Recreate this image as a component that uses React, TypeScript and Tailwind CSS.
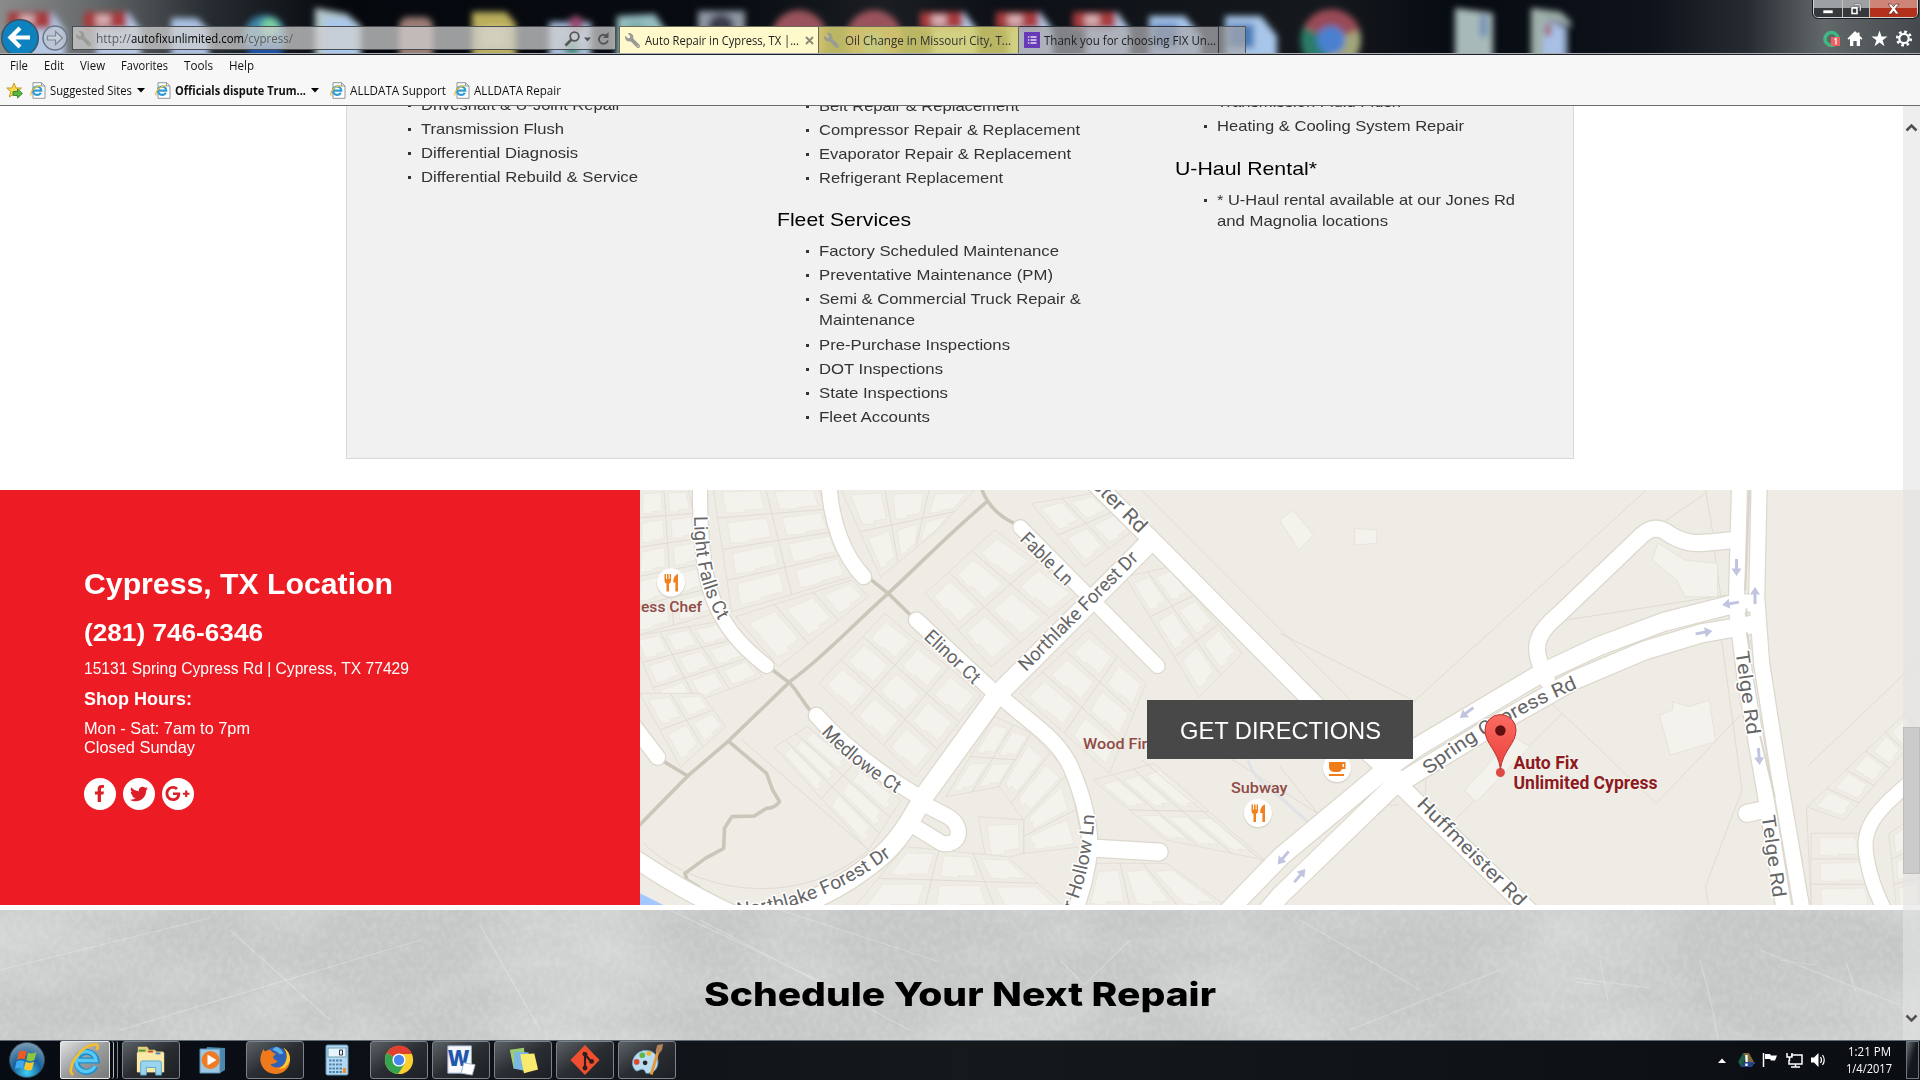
import React, { useLayoutEffect, useRef, useState } from "react";
import { FaFacebookF, FaTwitter, FaGooglePlusG, FaWrench } from "react-icons/fa";

/* Text stretched to a fixed measure, whatever the natural width of the face. */
function Fit({ w, children, className = "" }: { w: number; children: string; className?: string }) {
  const ref = useRef<HTMLSpanElement>(null);
  const [k, setK] = useState(1);
  useLayoutEffect(() => {
    if (ref.current && ref.current.offsetWidth) setK(w / ref.current.getBoundingClientRect().width);
  }, [w, children]);
  return (
    <span className={"block shrink-0 whitespace-pre " + className} style={{ width: w }}>
      <span ref={ref} className="inline-block origin-left" style={{ transform: k === 1 ? undefined : `scaleX(${k})` }}>
        {children}
      </span>
    </span>
  );
}

/* ---------- window frame ---------- */

function Pdf({ x }: { x: number }) {
  return (
    <g>
      <path d={`M${x + 12} 12h32l13 18v40h-45z`} fill="#b4c8e6" />
      <rect x={x} y="12" width="43" height="17" fill="#a83a3c" />
      <rect x={x + 12} y="15" width="14" height="10" fill="#d8b0b4" />
    </g>
  );
}

function GlassBackdrop() {
  return (
    <svg className="absolute inset-0" width="1920" height="54" viewBox="0 0 1920 54">
      <defs>
        <linearGradient id="glass" x1="0" x2="1">
          <stop offset="0" stopColor="#8a8c8c" />
          <stop offset="0.05" stopColor="#65686a" />
          <stop offset="0.11" stopColor="#252b30" />
          <stop offset="0.18" stopColor="#05080d" />
          <stop offset="0.38" stopColor="#080c12" />
          <stop offset="0.46" stopColor="#1a1e22" />
          <stop offset="0.52" stopColor="#0d1117" />
          <stop offset="0.69" stopColor="#15191d" />
          <stop offset="0.76" stopColor="#070b12" />
          <stop offset="0.86" stopColor="#0e131b" />
          <stop offset="0.91" stopColor="#262b31" />
          <stop offset="0.95" stopColor="#62686a" />
          <stop offset="1" stopColor="#43494c" />
        </linearGradient>
        <filter id="soft" x="-5%" y="-50%" width="110%" height="200%">
          <feGaussianBlur stdDeviation="3" />
        </filter>
      </defs>
      <rect width="1920" height="54" fill="url(#glass)" />
      <g filter="url(#soft)">
        <Pdf x={8} />
        <Pdf x={84} />
        <path d="M171 18h26l12 12v30h-38z" fill="#a9c0e2" />
        <circle cx="265" cy="36" r="21" fill="#3d83a8" />
        <circle cx="270" cy="27" r="9" fill="#78d2a0" />
        <path d="M248 44h34v20h-34z" fill="#1f4fa8" />
        <path d="M315 8l32 6 14 12v40h-46z" fill="#b4c6c8" />
        <path d="M324 18h24l10 10v40h-34z" fill="#a9c8ec" />
        <rect x="399" y="17" width="34" height="50" rx="9" fill="#9b7d74" />
        <path d="M472 12h34l10 12v40h-44z" fill="#b9ad5c" />
        <rect x="482" y="27" width="24" height="20" fill="#d8cd88" />
        <path d="M549 22h42v40h-42z" fill="#a6bede" />
        <circle cx="576" cy="24" r="8" fill="#9a4872" />
        <circle cx="572" cy="48" r="8" fill="#3d8a74" />
        <path d="M617 16l38 -2 13 20v30h-52z" fill="#94bcc0" />
        <circle cx="636" cy="32" r="10" fill="#76aa9c" />
        <rect x="698" y="11" width="47" height="50" fill="#8f98a3" />
        <circle cx="721" cy="27" r="13" fill="#3a3e50" />
        <circle cx="799" cy="38" r="28" fill="#9a525c" />
        <circle cx="799" cy="44" r="11" fill="#62a0c8" />
        <circle cx="874" cy="38" r="28" fill="#9a525c" />
        <circle cx="874" cy="44" r="11" fill="#62a0c8" />
        <Pdf x={920} />
        <Pdf x={996} />
        <Pdf x={1073} />
        <path d="M1149 16h36l16 20v30h-52z" fill="#a8c6ea" />
        <rect x="1152" y="24" width="26" height="24" fill="#467ab8" />
        <path d="M1225 16h36l16 20v30h-52z" fill="#a8c6ea" />
        <rect x="1228" y="24" width="26" height="24" fill="#467ab8" />
        <circle cx="1331" cy="40" r="30" fill="#a2a67a" />
        <path d="M1331 40L1304 27A30 30 0 0 1 1360 30z" fill="#984c56" />
        <path d="M1331 40L1304 27A30 30 0 0 0 1326 70z" fill="#2c7c68" />
        <circle cx="1331" cy="40" r="14" fill="#4a80d0" />
        <path d="M1455 8l38 5v50h-38z" fill="#a8bab8" />
        <rect x="1480" y="15" width="7" height="22" fill="#6d8db8" />
        <path d="M1531 8l30 4 10 10v40h-40z" fill="#9fb0aa" />
        <path d="M1543 22h22v40h-22z" fill="#a8c0e6" />
        <rect x="1545" y="24" width="6" height="12" fill="#a05048" />
        <path d="M1545 18l26 8v40h-6V28z" fill="#141a20" />
      </g>
    </svg>
  );
}

function Wrench() {
  return <FaWrench className="size-[15px] shrink-0 -scale-x-100 text-[#9a9a96]" />;
}

function TitleBar() {
  return (
    <header className="relative h-[54px] overflow-hidden bg-[#0a0e14]">
      <GlassBackdrop />
      <div className="relative flex h-[54px] items-start">
        <div className="flex h-[54px] w-[72px] shrink-0 items-start overflow-hidden pt-[19px]">
          <svg width="72" height="38" viewBox="0 0 72 38">
            <circle cx="20" cy="19" r="18.3" fill="#0d82be" stroke="#3f5360" strokeWidth="1.5" />
            <path d="M20 9l-9.5 9.5 9.5 9.5M11 18.5h19" fill="none" stroke="#fff" strokeWidth="4.2" />
            <circle cx="55" cy="19" r="12" fill="#bcc6d2" fillOpacity=".75" stroke="#6a7684" strokeWidth="1.5" />
            <path d="M47.5 17h8v-4.5l7 6.5-7 6.5V21h-8z" fill="#c8d0da" stroke="#7b8694" strokeWidth="1.2" />
          </svg>
        </div>
        <div className="mt-[26px] flex h-[24px] w-[544px] shrink-0 items-center border border-[#4a4e52] bg-[#cfcfcf]/75 pl-[3px] text-[12px] leading-[22px]">
          <Wrench />
          <Fit w={35} className="ml-[5px] mt-[2px] text-[#5c5c5c]">http://</Fit>
          <Fit w={113} className="mt-[2px] text-black">autofixunlimited.com</Fit>
          <Fit w={49} className="mt-[2px] text-[#5c5c5c]">/cypress/</Fit>
          <svg className="ml-auto mt-[2px]" width="52" height="20" viewBox="0 0 52 20">
            <circle cx="11.500" cy="7.500" r="4.300" fill="none" stroke="#555" strokeWidth="1.800" />
            <path d="M8.500 10.500l-6 6" stroke="#555" strokeWidth="2.600" />
            <path d="M21 8.500h7l-3.500 4z" fill="#555" />
            <path d="M44 7.500a4.500 4.500 0 1 0 .8 4" fill="none" stroke="#555" strokeWidth="1.900" />
            <path d="M45.500 3v6h-5.500z" fill="#555" />
          </svg>
        </div>
        <div className="ml-[3px] mt-[26px] flex h-[27px] text-[12px] leading-[26px]">
          <div className="flex w-[200px] items-center border border-b-0 border-[#6a6a58] bg-[#fff9cb] pl-[5px]">
            <Wrench />
            <Fit w={154} className="ml-[5px] mt-px text-[#222]">Auto Repair in Cypress, TX |...</Fit>
            <svg className="ml-[6px]" width="9" height="9" viewBox="0 0 9 9">
              <path d="M1 1l7 7M8 1l-7 7" stroke="#8e8c78" strokeWidth="2" />
            </svg>
          </div>
          <div className="flex w-[200px] items-center border-r border-t border-[#6a6a58] bg-[#d7d271]/85 pl-[5px]">
            <Wrench />
            <Fit w={166} className="ml-[6px] mt-px text-[#333]">Oil Change in Missouri City, T...</Fit>
          </div>
          <div className="flex w-[200px] items-center border-r border-t border-[#30343c] bg-[#a9a9ad]/75 pl-[5px]">
            <svg className="shrink-0" width="16" height="16" viewBox="0 0 16 16">
              <rect width="16" height="16" fill="#673ab7" />
              <path d="M6.500 5h6M6.500 8h6M6.500 11h6M4 5h1.300M4 8h1.300M4 11h1.300" stroke="#e6dcf5" strokeWidth="1.300" />
            </svg>
            <Fit w={172} className="ml-[4px] mt-px text-[#222]">Thank you for choosing FIX Un...</Fit>
          </div>
          <div className="w-[27px] border-r border-t border-[#50555e] bg-[#a9a9ad]/70" />
        </div>
        <div className="ml-auto flex w-[110px] shrink-0 flex-col">
          <div className="ml-[3px] flex h-[18px] w-[105px] overflow-hidden rounded-b-[5px] border border-t-0 border-[#d0d4d6] outline outline-[#15191d]">
            <div className="flex w-[29px] items-center justify-center border-r border-[#c0c4c6] bg-linear-to-b from-[#9da1a3] from-45% to-[#35393c] to-50%">
              <svg width="12" height="12"><rect x="1" y="7" width="10" height="3.500" fill="#fff" stroke="#444" strokeWidth=".7" /></svg>
            </div>
            <div className="flex w-[27px] items-center justify-center border-r border-[#c0c4c6] bg-linear-to-b from-[#9da1a3] from-45% to-[#35393c] to-50%">
              <svg width="12" height="12" viewBox="0 0 12 12">
                <path d="M4 1h7v7H9.500V2.500H4zM1 3.500h7v8H1zM3 6v3.500h3V6z" fill="#fff" fillRule="evenodd" stroke="#444" strokeWidth=".5" />
              </svg>
            </div>
            <div className="flex flex-1 items-center justify-center bg-linear-to-b from-[#cf8478] from-45% to-[#b5301a] to-50%">
              <svg width="13" height="12" viewBox="0 0 13 12">
                <path d="M1 1h3.300l2.200 2.800L8.700 1H12L8.300 5.800 12 11H8.700L6.500 8 4.300 11H1l3.700-5.200z" fill="#fff" stroke="#5a2a24" strokeWidth=".7" />
              </svg>
            </div>
          </div>
          <svg className="mt-[10px]" width="110" height="22" viewBox="0 0 110 22">
            <circle cx="21.500" cy="11" r="6.500" fill="none" stroke="#3fb984" strokeWidth="3.500" />
            <rect x="21" y="9" width="9" height="9" fill="#ee6163" />
            <path d="M24.500 11.500l1.500-1v6" fill="none" stroke="#fff" strokeWidth="1.200" />
            <path d="M45 3l-7.500 7.500 1.200 1.200 1.300-1.200V18h3.300v-5h3.400v5H50v-7.500l1.300 1.200 1.200-1.200-3-3V4.500h-2v1z" fill="#fff" />
            <path d="M69.500 2.500l2 6h6l-4.900 3.700 1.900 6.100-5-3.700-5 3.700 1.900-6.100-4.900-3.700h6z" fill="#fff" />
            <circle cx="94" cy="10.500" r="6.800" fill="none" stroke="#fff" strokeWidth="2.600" strokeDasharray="2.670 2.670" />
            <circle cx="94" cy="10.500" r="4.700" fill="none" stroke="#fff" strokeWidth="2.200" />
          </svg>
        </div>
      </div>
      <div className="absolute inset-x-0 bottom-0 h-px bg-[#a9adb3]" />
    </header>
  );
}

function IePage() {
  return (
    <svg className="shrink-0" width="16" height="17" viewBox="0 0 16 17">
      <path d="M3 .7h8.500L15 4v12.300H3z" fill="#fff" stroke="#8e959c" />
      <path d="M11.500 .7V4H15" fill="none" stroke="#8e959c" />
      <path d="M10.800 10.700A4.200 4.200 0 1 1 11.300 8.600H3.500" fill="none" stroke="#2f9ad8" strokeWidth="2.100" />
      <path d="M1.200 13.500C-.5 10 5 3.500 11 4" fill="none" stroke="#e8b838" strokeWidth="1.200" />
    </svg>
  );
}

function Caret() {
  return <svg className="shrink-0" width="8" height="5"><path d="M0 0h8L4 4.500z" fill="#000" /></svg>;
}

function Toolbars() {
  return (
    <div className="h-[52px] border-b border-t border-b-[#6b6b70] border-t-[#1c2228] bg-[#f7f7f7] text-[12px] text-[#111]">
      <nav className="flex h-[22px] items-center pl-[10px] leading-[22px]">
        <Fit w={18} className="mr-[16px]">File</Fit>
        <Fit w={20} className="mr-[16px]">Edit</Fit>
        <Fit w={25} className="mr-[16px]">View</Fit>
        <Fit w={47} className="mr-[16px]">Favorites</Fit>
        <Fit w={29} className="mr-[16px]">Tools</Fit>
        <Fit w={25}>Help</Fit>
      </nav>
      <nav className="flex h-[27px] items-center pl-[6px] leading-[27px]">
        <svg className="mr-[7px] shrink-0" width="17" height="17" viewBox="0 0 17 17">
          <path d="M8 1l2 5h5.500l-4.300 3.600 1.500 5.400L8 12l-4.700 3 1.500-5.400L.7 6H6z" fill="#f9da52" stroke="#c99a24" />
          <path d="M7 9.500h4.500V7l5 4.500-5 4.500v-2.500H7z" fill="#55b840" stroke="#2c7a22" strokeWidth=".8" />
        </svg>
        <IePage />
        <Fit w={82} className="ml-[4px] mr-[5px]">Suggested Sites</Fit>
        <Caret />
        <span className="w-[10px] shrink-0" />
        <IePage />
        <Fit w={131} className="ml-[4px] mr-[5px] font-bold">Officials dispute Trum...</Fit>
        <Caret />
        <span className="w-[11px] shrink-0" />
        <IePage />
        <Fit w={96} className="ml-[4px] mr-[8px]">ALLDATA Support</Fit>
        <IePage />
        <Fit w={87} className="ml-[4px]">ALLDATA Repair</Fit>
      </nav>
    </div>
  );
}

/* ---------- services panel ---------- */

type Item = [string, number][];

function Services({ items }: { items: Item[] }) {
  return (
    <ul className="text-[15px] leading-[21px] text-[#333]">
      {items.map((lines) => (
        <li key={lines[0][0]} className="mb-[3.1px] flex">
          <span className="mt-[10px] mr-[10px] size-[3px] shrink-0 bg-[#333]" />
          <span>
            {lines.map(([t, w]) => (
              <Fit key={t} w={w}>{t}</Fit>
            ))}
          </span>
        </li>
      ))}
    </ul>
  );
}

function ServicesPanel() {
  return (
    <section className="flex h-[384px] shrink-0 justify-center">
      <div className="mr-[1px] flex h-[353px] w-[1228px] overflow-hidden border border-t-0 border-[#d8d8d8] bg-[#f1f1f1] font-['Liberation_Sans',sans-serif]">
        <div className="-mt-[12px] ml-[61px] w-[369px] shrink-0">
          <Services items={[[["Driveshaft & U-Joint Repair", 200]], [["Transmission Flush", 143]], [["Differential Diagnosis", 157]], [["Differential Rebuild & Service", 217]]]} />
        </div>
        <div className="-mt-[11.5px] w-[398px] shrink-0">
          <div className="ml-[29px]">
            <Services items={[[["Belt Repair & Replacement", 200]], [["Compressor Repair & Replacement", 261]], [["Evaporator Repair & Replacement", 252]], [["Refrigerant Replacement", 184]]]} />
          </div>
          <h3 className="mt-[19.500px] mb-[7px] text-[19px] leading-[26px] text-black"><Fit w={134}>Fleet Services</Fit></h3>
          <div className="ml-[29px]">
            <Services
              items={[
                [["Factory Scheduled Maintenance", 240]],
                [["Preventative Maintenance (PM)", 234]],
                [["Semi & Commercial Truck Repair &", 262], ["Maintenance", 96]],
                [["Pre-Purchase Inspections", 191]],
                [["DOT Inspections", 124]],
                [["State Inspections", 129]],
                [["Fleet Accounts", 111]],
              ]}
            />
          </div>
        </div>
        <div className="-mt-[15px] shrink-0">
          <div className="ml-[29px]">
            <Services items={[[["Transmission Fluid Flush", 184]], [["Heating & Cooling System Repair", 247]]]} />
          </div>
          <h3 className="mt-[20px] mb-[7px] text-[19px] leading-[26px] text-black"><Fit w={142}>U-Haul Rental*</Fit></h3>
          <div className="ml-[29px]">
            <Services items={[[["* U-Haul rental available at our Jones Rd", 298], ["and Magnolia locations", 171]]]} />
          </div>
        </div>
      </div>
    </section>
  );
}

/* ---------- map ---------- */

type P = [number, number];
type Block = { q: [P, P, P, P]; rows: number; cols: number };

/* City blocks as quads (top-left, top-right, bottom-right, bottom-left), cut into parcels. */
const blocks: Block[] = [
  { q: [[0, 25], [118, 25], [185, 400], [-20, 470]], rows: 5, cols: 2 },
  { q: [[-20, 470], [190, 425], [300, 590], [60, 700]], rows: 3, cols: 3 },
  { q: [[0, 640], [150, 640], [210, 740], [100, 860]], rows: 2, cols: 2 },
  { q: [[180, 20], [435, 20], [520, 290], [225, 395]], rows: 4, cols: 2 },
  { q: [[235, 410], [520, 300], [560, 350], [340, 560]], rows: 1, cols: 3 },
  { q: [[490, 20], [820, 30], [720, 160], [590, 290]], rows: 2, cols: 3 },
  { q: [[600, 400], [835, 645], [675, 890], [440, 610]], rows: 3, cols: 3 },
  { q: [[870, 150], [1075, 340], [860, 560], [700, 340]], rows: 3, cols: 2 },
  { q: [[960, 70], [1110, 40], [1210, 150], [1090, 260]], rows: 2, cols: 2 },
  { q: [[1100, 450], [1240, 610], [1150, 880], [930, 640]], rows: 3, cols: 2 },
  { q: [[1190, 290], [1300, 260], [1475, 520], [1370, 650]], rows: 3, cols: 2 },
  { q: [[330, 800], [410, 740], [640, 960], [560, 1110]], rows: 2, cols: 3 },
  { q: [[870, 710], [960, 760], [880, 920], [750, 950]], rows: 2, cols: 2 },
  { q: [[960, 760], [1050, 880], [940, 1020], [880, 920]], rows: 1, cols: 2 },
  { q: [[1050, 880], [1085, 1100], [940, 1120], [940, 1020]], rows: 1, cols: 2 },
  { q: [[830, 1010], [940, 1020], [940, 1120], [850, 1150]], rows: 1, cols: 1 },
  { q: [[650, 1100], [900, 1130], [1050, 1290], [520, 1290]], rows: 2, cols: 3 },
  { q: [[1110, 900], [1260, 850], [1530, 1140], [1290, 1080]], rows: 2, cols: 3 },
  { q: [[1120, 1150], [1290, 1150], [1450, 1290], [1080, 1290]], rows: 1, cols: 3 },
  { q: [[2860, 980], [3100, 700], [3136, 760], [2950, 1020]], rows: 1, cols: 5 },
  { q: [[2870, 1060], [2990, 1060], [3030, 1290], [2870, 1290]], rows: 3, cols: 1 },
  { q: [[3060, 1060], [3136, 1000], [3136, 1290], [3080, 1290]], rows: 3, cols: 1 },
];

function lerp(q: Block["q"], u: number, v: number): P {
  const f = (i: 0 | 1) =>
    (1 - v) * ((1 - u) * q[0][i] + u * q[1][i]) + v * ((1 - u) * q[3][i] + u * q[2][i]);
  return [Math.round(f(0)), Math.round(f(1))];
}

function Parcels({ q, rows, cols }: Block) {
  const cells: React.ReactNode[] = [];
  for (let r = 0; r < rows; r++)
    for (let c = 0; c < cols; c++) {
      const at = (du: number, dv: number) => lerp(q, (c + du) / cols, (r + dv) / rows).join(",");
      cells.push(
        <g key={`${r}-${c}`}>
          <polygon points={[at(0, 0), at(1, 0), at(1, 1), at(0, 1)].join(" ")} fill="#efece5" stroke="#dfdbd2" strokeWidth="2" />
          <polygon
            points={[at(0.16, 0.18), at(0.88, 0.14), at(0.88, 0.82), at(0.5, 0.82), at(0.5, 0.9), at(0.16, 0.86)].join(" ")}
            fill="#f4f2ec"
            stroke="#e8e5dd"
            strokeWidth="2"
          />
        </g>
      );
    }
  return <g>{cells}</g>;
}

const roads: [string, number][] = [
  ["M147 10V60C150 250 165 350 210 430C230 470 270 520 310 558", 14],
  ["M463 10C468 130 500 230 548 290", 15],
  ["M677 420L875 645", 15],
  ["M875 640C960 735 1020 770 1055 860C1090 960 1104 1050 1102 1110C1095 1190 1080 1240 1065 1300", 15],
  ["M932 142L1268 558", 14],
  ["M1250 185L875 645L695 950C660 1030 630 1090 580 1140C500 1220 400 1285 280 1310", 19],
  ["M-20 1130C60 1195 120 1240 240 1310", 17],
  ["M432 706C500 800 600 890 690 955", 15],
  ["M700 975L755 1010C795 1040 785 1100 740 1090L660 1030", 15],
  ["M1090 -20L1250 175L1660 680L1850 890", 17],
  ["M1840 890L2195 1310", 16],
  ["M1115 1105L1272 1116", 17],
  ["M-20 730L43 832", 15],
  ["M1420 1320L1570 1130L1820 875L1905 800L2210 578L2350 498L2510 425L2670 375L2710 370", 18],
  ["M1510 1330L1570 1245L1840 925L1910 872L2080 745L2290 600L2460 512L2600 460L2720 435", 18],
  ["M2222 600L2205 550C2190 500 2195 460 2250 405L2455 165C2478 140 2500 140 2525 165C2575 200 2600 190 2680 180", 16],
  ["M2694 10L2686 380L2708 600L2758 950L2806 1310", 15],
  ["M2742 10L2736 350L2748 550L2790 880L2850 1310", 15],
  ["M2750 990L2712 1000", 17],
  ["M3160 860C3010 1000 2990 1050 3008 1150C3020 1230 3040 1260 3055 1310", 14],
];

const footpaths = [
  "M835 20C850 75 880 110 920 132",
  "M850 65C740 180 680 260 608 340C500 460 450 530 370 602L215 785L115 890L-5 1040",
  "M565 298L608 340L665 408",
  "M325 570L368 610C390 640 400 670 422 698",
  "M55 842L117 888",
  "M218 785L310 880L325 930L342 965Q330 985 310 985L280 1008L225 1010L207 1045L205 1105L160 1135L110 1180L115 1200L145 1222",
];

const boundaries =
  "M2470 25L1900 660M2610 25L2628 155M2610 40L2480 150M1225 25L1870 820M2630 190L2648 350M2270 420L2660 345M2225 660L2490 970L2700 700M2260 700L2000 1015M1925 900V950M2650 480L2700 930L2610 1220L2620 1290M3150 520L2860 860M1900 665L1568 460M1440 830L1660 1000M1230 840L1560 1180M250 780L560 1110M10 1090C120 1230 380 1300 560 1110M1870 940L2160 1290M1860 975H1830L1568 1275M2720 480L2850 1150M1568 860L1660 1000M2858 985L2870 1290";

const arrows: [number, number, number][] = [
  [1096.500, 77, 180], [1115, 106, 0], [1091, 113.500, -100], [1063.500, 142.500, 80],
  [827, 222.500, -128], [1119, 266, 176], [643.500, 367.500, -140], [659.500, 386, 40],
];

function Label({ x, y, r = 0, len, size = 19, children }: { x: number; y: number; r?: number; len: number; size?: number; children: string }) {
  return (
    <text transform={`translate(${x} ${y}) rotate(${r})`} fontSize={size} textLength={len} lengthAdjust="spacingAndGlyphs">
      {children}
    </text>
  );
}

function PathLabel({ id, len, children }: { id: string; len: number; children: string }) {
  return (
    <text fontSize="19" textLength={len} lengthAdjust="spacingAndGlyphs">
      <textPath href={"#" + id} textLength={len} lengthAdjust="spacingAndGlyphs">{children}</textPath>
    </text>
  );
}

function Dining({ x, y }: { x: number; y: number }) {
  return (
    <g transform={`translate(${x} ${y})`}>
      <circle r="14.500" cy="1" fill="#d9d5cc" />
      <circle r="14" fill="#fff" />
      <path d="M-6.500 -8.500v6.500q0 2.500 2 3v8h2.500V1q2-.5 2-3v-6.500h-1.400v5h-1v-5h-1.600v5h-1v-5zM7 -8.500q-4.800 1-4.800 8.500h2.200v9h2.600z" fill="#f0811c" />
    </g>
  );
}

function StreetMap() {
  return (
    <svg width="1280" height="415" viewBox="0 0 1280 415" className="block bg-[#efece5] font-['Roboto',sans-serif]">
      <defs>
        <path id="lightFalls" d="M54 26C55 75 62 103 82 136" />
        <path id="northlake" d="M97 426C150 422 205 402 259 360" />
        <path id="hollow" d="M434 420C445 393 453 362 455 318" />
        <path id="spring" d="M789 285Q850 235 945 195" />
        <path id="medlowe" d="M181 243Q211 277 270 312" />
        <linearGradient id="pin" x1="0" y1="0" x2="0" y2="1">
          <stop offset="0" stopColor="#fb6b62" />
          <stop offset="1" stopColor="#e9423c" />
        </linearGradient>
      </defs>
      <g transform="translate(0 -10) scale(.40816 .33333)" strokeLinecap="round" strokeLinejoin="round" fill="none">
        {blocks.map((b, i) => <Parcels key={i} {...b} />)}
        <path d={boundaries} stroke="#e0dcd2" strokeWidth="1" vectorEffect="non-scaling-stroke" />
        <path d="M1568 120L1600 90L1650 165L1615 210ZM1752 145L1805 150V190L1752 195ZM2495 190L2560 240L2640 250V350H2560L2540 300L2480 240ZM2498 705L2530 690V665L2570 680L2620 660L2635 785L2525 825ZM2020 930L2140 770L2180 800L2050 965Z" fill="#f4f2ed" stroke="#e2ded5" strokeWidth="2" />
        <path d="M0 1240L65 1280H0ZM1562 1130V1150L1580 1120Z" fill="#a3c7ff" />
        <path d="M1490 840Q1500 890 1540 920L1640 1030" stroke="#dfe3e6" strokeWidth="3" vectorEffect="non-scaling-stroke" />
        {footpaths.map((d) => <path key={d} d={d} stroke="#cbc6ba" strokeWidth="3.600" vectorEffect="non-scaling-stroke" />)}
        {roads.map(([d, w]) => <path key={d} d={d} stroke="#dcd8cd" strokeWidth={w + 2.5} vectorEffect="non-scaling-stroke" />)}
        {roads.map(([d, w]) => <path key={d} d={d} stroke="#fff" strokeWidth={w} vectorEffect="non-scaling-stroke" />)}
        <path d="M2718 30L2708 330M2711 388V405M2712 460L2720 520M2745 770L2780 950" stroke="#d9d5ca" strokeWidth="2" vectorEffect="non-scaling-stroke" />
      </g>
      {arrows.map(([x, y, r]) => (
        <path key={`${x}`} transform={`translate(${x} ${y}) rotate(${r})`} d="M0 -9l5 7.500h-3.500V8h-3V-1.500H-5z" fill="#c0c4de" />
      ))}
      <g fill="#666" stroke="#fff" strokeWidth="3" paintOrder="stroke" strokeLinejoin="round">
        <PathLabel id="lightFalls" len={109}>Light Falls Ct</PathLabel>
        <PathLabel id="northlake" len={168}>Northlake Forest Dr</PathLabel>
        <PathLabel id="hollow" len={98}>r Hollow Ln</PathLabel>
        <PathLabel id="spring" len={173}>Spring Cypress Rd</PathLabel>
        <PathLabel id="medlowe" len={97}>Medlowe Ct</PathLabel>
        <Label x={379} y={50} r={45} len={66}>Fable Ln</Label>
        <Label x={451} y={-4} r={45} len={68} size={20}>ster Rd</Label>
        <Label x={386} y={182} r={-45} len={160}>Northlake Forest Dr</Label>
        <Label x={283} y={148} r={43} len={69}>Elinor Ct</Label>
        <Label x={1095.5} y={162} r={82} len={84}>Telge Rd</Label>
        <Label x={1121.5} y={326} r={82} len={83}>Telge Rd</Label>
        <Label x={776} y={315} r={45} len={145}>Huffmeister Rd</Label>
      </g>
      <g fill="#8f4b45" fontWeight="500">
        <Label x={1} y={122} len={61} size={15.5}>ess Chef</Label>
        <Label x={443} y={259} len={82} size={15.5}>Wood Fired</Label>
        <Label x={591} y={302.5} len={56.5} size={15.5}>Subway</Label>
      </g>
      <Dining x={31} y={92.500} />
      <Dining x={618} y={323} />
      <g transform="translate(697 278)">
        <circle r="14.500" cy="1" fill="#d9d5cc" />
        <circle r="14" fill="#fff" />
        <path d="M-8 -6H8.500V1H5q-1 3-4 3h-4.500Q-8 3-8 -1zM5.500 -4v3H7v-3zM-8 6H7v2H-8z" fill="#ef7d1a" fillRule="evenodd" />
      </g>
      <circle cx="860.400" cy="282.500" r="4.500" fill="#de4a44" />
      <path d="M860.400 279C858 260 845 254 845 240A15.500 15.500 0 0 1 876 240C876 254 863 260 860.400 279Z" fill="url(#pin)" stroke="#b8332f" strokeWidth="1" />
      <circle cx="860.400" cy="240.500" r="5.200" fill="#601010" />
      <g fill="#8c1a1f" fontWeight="700" stroke="#f3f0ea" strokeWidth="2" paintOrder="stroke">
        <Label x={873.5} y={278.5} len={65} size={17.5}>Auto Fix</Label>
        <Label x={873.5} y={299} len={144} size={17.5}>Unlimited Cypress</Label>
      </g>
    </svg>
  );
}

function Social({ children }: { children: React.ReactNode }) {
  return <a className="mr-[7.5px] flex size-[31.5px] items-center justify-center rounded-full bg-white text-[#dc1e26]">{children}</a>;
}

function LocationSection() {
  return (
    <section className="flex h-[415px] shrink-0">
      <div className="w-[640px] shrink-0 bg-[#ed1c24] pl-[84px] pt-[76px] font-['Liberation_Sans',sans-serif] text-white">
        <h2 className="text-[30px] font-bold leading-[36px]"><Fit w={309}>Cypress, TX Location</Fit></h2>
        <p className="mt-[16px] text-[23.5px] font-bold leading-[30px]"><Fit w={179}>(281) 746-6346</Fit></p>
        <p className="mt-[10px] text-[16.5px] leading-[20px]"><Fit w={325}>15131 Spring Cypress Rd | Cypress, TX 77429</Fit></p>
        <p className="mt-[10px] text-[17.5px] font-bold leading-[22px]"><Fit w={108}>Shop Hours:</Fit></p>
        <div className="mt-[9px] text-[16.5px] leading-[19px]">
          <Fit w={166}>Mon - Sat: 7am to 7pm</Fit>
          <Fit w={111}>Closed Sunday</Fit>
        </div>
        <div className="mt-[21px] flex">
          <Social><FaFacebookF className="size-[17px]" /></Social>
          <Social><FaTwitter className="size-[18px]" /></Social>
          <Social><FaGooglePlusG className="size-[25px]" /></Social>
        </div>
      </div>
      <div className="relative w-[1280px] shrink-0 overflow-hidden">
        <StreetMap />
        <button className="absolute left-[507px] top-[210px] flex h-[59px] w-[266px] items-center justify-center bg-[#484848] pt-[3px] font-['Liberation_Sans',sans-serif] text-[24px] leading-[30px] text-white">
          <Fit w={201} className="text-left">GET DIRECTIONS</Fit>
        </button>
      </div>
    </section>
  );
}

function ScheduleSection() {
  return (
    <section className="relative mt-[5px] flex h-[130px] shrink-0 justify-center overflow-hidden bg-[#c4c7c6] pt-[64px]">
      <svg className="absolute inset-0" width="1920" height="131">
        <filter id="cloud" x="0" y="0" width="100%" height="100%">
          <feTurbulence type="fractalNoise" baseFrequency="0.006 0.012" numOctaves="3" seed="4" />
          <feColorMatrix values="0 0 0 0 1  0 0 0 0 1  0 0 0 0 1  1.200 0 0 0 -0.450" />
        </filter>
        <filter id="grain" x="0" y="0" width="100%" height="100%">
          <feTurbulence type="fractalNoise" baseFrequency="0.180 0.140" numOctaves="3" seed="7" />
          <feColorMatrix values="0 0 0 0 1  0 0 0 0 1  0 0 0 0 1  1 0 0 0 -0.350" />
        </filter>
        <rect width="1920" height="131" filter="url(#cloud)" opacity=".5" />
        <rect width="1920" height="131" filter="url(#grain)" opacity=".3" />
        <g stroke="#fff" strokeWidth="1.200" fill="none" opacity=".25">
          <path d="M670 0L860 90M700 10L910 120M780 0L940 52M1060 50L1084 75L1130 30M0 60L210 8M120 120L420 30M1576 72L1600 75M1575 68L1650 78M1600 50L1608 90M1700 50Q1712 90 1718 130M1760 40L1900 95M1780 50L1815 55M1846 52L1856 82M1300 10L1420 80M1350 120L1500 60M230 20L330 110M480 15L540 120" />
        </g>
      </svg>
      <h2 className="relative text-[32px] font-extrabold leading-[42px] text-black font-['Inter',sans-serif]"><Fit w={512}>Schedule Your Next Repair</Fit></h2>
    </section>
  );
}

function Scrollbar() {
  return (
    <div className="absolute right-0 top-0 flex h-[934px] w-[17px] flex-col items-center bg-[#e2e2e2]/60">
      <svg className="mt-[17px]" width="13" height="9"><path d="M1.500 7.500l5-5 5 5" fill="none" stroke="#505050" strokeWidth="2.500" /></svg>
      <div className="mt-[595px] h-[147px] w-[17px] border border-[#bdbdbd] bg-[#cbcbcb]" />
      <svg className="mt-[140px]" width="13" height="9"><path d="M1.500 1.500l5 5 5-5" fill="none" stroke="#505050" strokeWidth="2.500" /></svg>
    </div>
  );
}

/* ---------- taskbar ---------- */

function Task({ w, children }: { w: number; children: React.ReactNode }) {
  return (
    <div className="mr-[4px] flex h-[38px] shrink-0 items-center justify-center rounded-[3px] border border-[#7d8388] bg-linear-to-br from-[#5d6266] via-[#2a2e32] to-[#1c2024]" style={{ width: w }}>
      <svg width="32" height="32" viewBox="0 0 34 34">{children}</svg>
    </div>
  );
}

function Taskbar() {
  return (
    <footer className="flex h-[40px] items-start border-t border-[#5f6a74] bg-linear-to-r from-[#070b12] via-[#15191c] to-[#0a0d12]">
      <div className="w-[60px] shrink-0 pl-[8px]">
        <svg width="38" height="38" viewBox="0 0 38 38">
          <defs>
            <radialGradient id="orb" cx=".5" cy=".85" r=".9">
              <stop offset="0" stopColor="#3fd0f5" />
              <stop offset=".45" stopColor="#17629c" />
              <stop offset="1" stopColor="#8da5b5" />
            </radialGradient>
          </defs>
          <circle cx="19" cy="19" r="17.500" fill="url(#orb)" stroke="#33465a" />
          <path d="M11 11q4-2.500 7.500-.5l-1.800 8q-3.700-1.700-7.700.5z" fill="#ee5a24" />
          <path d="M20 11.500q4 2 8.500-.5l-2 8q-4 2.300-8.200 0z" fill="#8cc63f" />
          <path d="M8.500 20.500q4-2.200 7.700-.3l-1.700 7.300q-3.500-1.500-7.500.5z" fill="#3fa9f5" />
          <path d="M17.700 20.800q4 2.200 8.300 0l-2 7.700q-4 2-8-.5z" fill="#fcc52a" />
        </svg>
      </div>
      <div className="flex h-[38px] w-[50px] shrink-0 items-center justify-center rounded-[2px] border border-[#e8e8e8] bg-linear-to-br from-[#dfe1e2] via-[#9a9c9e] to-[#77797b]">
        <svg width="34" height="36" viewBox="0 0 34 36">
          <path d="M27.500 24.500A10 10 0 1 1 28.500 18.500H10" fill="none" stroke="#1c8fd0" strokeWidth="6" />
          <path d="M27 24A10 10 0 1 1 28 18.500H10" fill="none" stroke="#58c8f4" strokeWidth="3.500" />
          <path d="M5 33C-3 28 12 2 28 2.500Q31 3 29 8" fill="none" stroke="#f5bf2c" strokeWidth="2.600" />
        </svg>
      </div>
      <div className="mr-[4px] flex h-[38px] w-[8px] shrink-0 gap-[2px] pl-px">
        <span className="w-[3px] rounded-r border-r border-[#b8bcc0]" />
        <span className="w-[3px] rounded-r border-r border-[#7d8388]" />
      </div>
      <Task w={58}>
        <path d="M3 3h10l2 3h6l2 2h7v22H3z" fill="#e8cf7c" />
        <path d="M2 9h29v21H2z" fill="#f8e9a8" />
        <path d="M4 6h7v2H4z" fill="#3f9a48" /><path d="M14 7h5v2h-5z" fill="#c9462e" /><path d="M22 9h5v2h-5z" fill="#4b7cc0" />
        <path d="M6 33V20q0-2 2-2h18q2 0 2 2v13h-6V25H12v8z" fill="#9ad4ee" stroke="#5ba6cc" />
      </Task>
      <div className="mr-[6px] flex h-[38px] w-[56px] items-center justify-center">
        <svg width="28" height="30" viewBox="0 0 28 30">
          <path d="M9 2l18 1v22l-5 3-18-1z" fill="#4a86ae" />
          <path d="M2 4h20v24H2z" fill="#9cc8e4" stroke="#5d93b8" />
          <circle cx="12.500" cy="15" r="9" fill="#f17a24" /><path d="M9.500 9.500l9 5.500-9 5.500z" fill="#fff" />
        </svg>
      </div>
      <Task w={58}>
        <circle cx="18" cy="16" r="13" fill="#2f62b4" />
        <path d="M18 3q6 2 8 7l-4 1q-3-4-8-5z" fill="#5fb0e8" />
        <path d="M5 5q-5 8-3 15c2 8 9 12 16 12s15-6 15-15Q33 8 26 4q5 6 3 13-3 8-10 8-5 0-7-4 5 1 8-3-5-1-5-5l3-2Q14 9 12 6 8 6 7 8 5 7 5 5z" fill="#ee7a1c" />
        <path d="M26 4q5 6 3 13-2 7-8 9 8 2 12-9Q33 8 26 4z" fill="#fcc832" />
      </Task>
      <div className="mr-[4px] flex h-[38px] w-[58px] items-center justify-center">
        <svg width="24" height="32" viewBox="0 0 24 32">
          <rect x="1" y="1" width="22" height="30" rx="1.500" fill="#b4d8f0" stroke="#5d93b8" />
          <rect x="3" y="4" width="18" height="9" fill="#e8f4fb" stroke="#6e9cba" />
          <path d="M14.500 6h3v5h-3z" fill="none" stroke="#334" />
          <path d="M4 16.500h13M4 20.500h13M4 24.500h13M4 28h13" stroke="#4d85b0" strokeWidth="2.200" strokeDasharray="2.500 1" />
          <path d="M18 24h3v5h-3z" fill="#ef8c2c" />
        </svg>
      </div>
      <Task w={58}>
        <circle cx="17" cy="17" r="15" fill="#fbcf2f" />
        <path d="M17 17L4 9.500A15 15 0 0 1 31 10.500H17z" fill="#e0402f" />
        <path d="M17 17L4 9.500A15 15 0 0 0 16 32l7-11z" fill="#35a350" />
        <circle cx="17" cy="17" r="7" fill="#fff" /><circle cx="17" cy="17" r="5.500" fill="#4686ee" />
      </Task>
      <Task w={58}>
        <path d="M3 2h25v29H3z" fill="#f6f8fb" stroke="#9db2d0" />
        <text x="14.500" y="23" fontSize="24" fontWeight="900" fill="#1f57ad" textAnchor="middle" textLength="23" lengthAdjust="spacingAndGlyphs" className="font-['Noto_Sans',sans-serif]">W</text>
        <path d="M20 20l12 2-3 11-12-2z" fill="#fff" stroke="#9db2d0" />
      </Task>
      <Task w={57.500}>
        <path d="M3 6l15-2 2 19-13 3z" fill="#9ccf6c" />
        <path d="M8 8l15 1-2 20-14-3z" fill="#7cb8e4" />
        <path d="M14 11l15-1 4 17-15 4z" fill="#f9ea6e" />
      </Task>
      <Task w={58}>
        <path d="M17 1l15.500 16L17 33 1.500 17z" fill="#f04e31" />
        <path d="M17 9v17M15 9l8 9" stroke="#2b1e1c" strokeWidth="2.200" />
        <circle cx="17" cy="11" r="2.600" fill="#2b1e1c" /><circle cx="17" cy="25.500" r="2.600" fill="#2b1e1c" /><circle cx="24" cy="18.500" r="2.600" fill="#2b1e1c" />
      </Task>
      <Task w={58}>
        <path d="M14 7C4 8-2 20 4 27c3 4 5-1 9 0 3 1 1 5 6 4 8-1 11-9 9-16-2-6-8-9-14-8z" fill="#b9dcf0" stroke="#6da4c8" />
        <circle cx="12" cy="12" r="3" fill="#5cb84a" /><circle cx="6" cy="19" r="3" fill="#d9482f" /><circle cx="19" cy="10" r="2.600" fill="#f0b42c" /><circle cx="15" cy="20" r="2.500" fill="#20262c" />
        <path d="M20 32L27 8l3 1-7 24z" fill="#e39a3c" /><path d="M26 8l2-7 6-1-1 6-3 4z" fill="#b5835a" />
      </Task>
      <div className="ml-auto flex h-[38px] items-center">
        <svg width="120" height="24" viewBox="0 0 120 24">
          <path d="M8 15h8l-4-4.500z" fill="#fff" />
          <path d="M33 5h6l6 11H38z" fill="#7d6a34" /><path d="M33 5l3 5.500-5 8.500-3-5z" fill="#1e5c44" /><path d="M31 19l3-5h11l-3 5z" fill="#27458c" />
          <path d="M36.500 7v7M36.500 15.500v2.500" stroke="#fff" strokeWidth="2.300" />
          <path d="M53.500 5v14" stroke="#fff" strokeWidth="1.500" /><path d="M55 6h5l1 1.500h6l-2 5h-4l-1-1.500h-5z" fill="#fff" />
          <path d="M81 7h11v9H79v-4" fill="none" stroke="#fff" strokeWidth="1.500" /><path d="M81 19h9M85.500 16v3M77 5v4h5V5M79.500 9v4" fill="none" stroke="#fff" strokeWidth="1.500" />
          <path d="M101 9.500h3l4.500-4.500v14L104 14.500h-3z" fill="#fff" /><path d="M110.500 9q2 3 0 6M112.500 7q3.500 5 0 10" fill="none" stroke="#fff" strokeWidth="1.200" />
        </svg>
        <div className="ml-[16px] flex w-[46px] flex-col items-center text-[12px] leading-[17px] text-white">
          <Fit w={43}>1:21 PM</Fit>
          <Fit w={46}>1/4/2017</Fit>
        </div>
        <div className="ml-[14px] mr-px h-[38px] w-[13px] border border-[#6d747a] bg-linear-to-br from-[#6a7076] to-[#14181c] to-50%" />
      </div>
    </footer>
  );
}

export default function App() {
  return (
    <div className="flex h-[1080px] w-[1920px] flex-col overflow-hidden bg-white font-['Open_Sans','Noto_Sans',sans-serif]">
      <TitleBar />
      <Toolbars />
      <main className="relative flex h-[934px] shrink-0 flex-col overflow-hidden bg-white">
        <ServicesPanel />
        <LocationSection />
        <ScheduleSection />
        <Scrollbar />
      </main>
      <Taskbar />
    </div>
  );
}
